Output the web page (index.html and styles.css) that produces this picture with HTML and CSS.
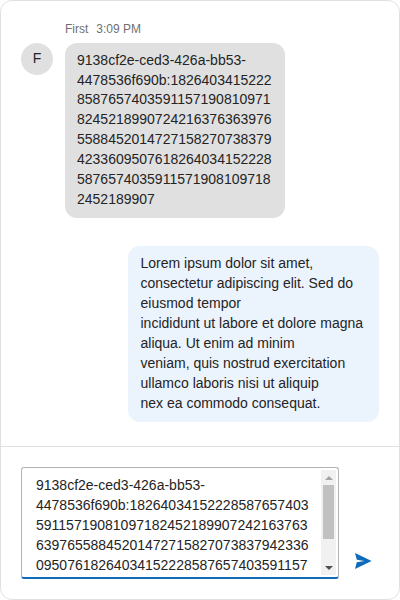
FILE: index.html
```html
<!DOCTYPE html>
<html lang="en">
<head>
<meta charset="utf-8">
<title>Chat</title>
<link rel="stylesheet" href="styles.css">
</head>
<body>
<main class="chat">
  <section class="messages">
    <div class="row incoming">
      <div class="avatar">F</div>
      <div class="content">
        <div class="meta"><span>First</span><time>3:09 PM</time></div>
        <div class="bubble">9138cf2e-ced3-426a-bb53-4478536f690b:182640341522285876574035911571908109718245218990724216376363976558845201472715827073837942336095076182640341522285876574035911571908109718&#8203;2452189907</div>
      </div>
    </div>
    <div class="row outgoing">
      <div class="bubble">Lorem ipsum dolor sit amet, consectetur adipiscing elit. Sed do eiusmod tempor
incididunt ut labore et dolore magna aliqua. Ut enim ad minim
veniam, quis nostrud exercitation ullamco laboris nisi ut aliquip
nex ea commodo consequat.</div>
    </div>
  </section>
  <footer class="composer">
    <div class="field">
      <div class="text">9138cf2e-ced3-426a-bb53-<br>4478536f690b:18264034152228587657403<br>59115719081097182452189907242163763<br>63976558845201472715827073837942336<br>09507618264034152228587657403591157</div>
      <div class="scrollbar"><i class="up"></i><i class="thumb"></i><i class="down"></i></div>
    </div>
    <button class="send" aria-label="Send"><svg width="18" height="18" viewBox="0 0 18 18"><path d="M0 1L16.6 9L0 17L1.8 10.3L9.5 9L1.8 7.7Z" fill="#0f6cbd"/></svg></button>
  </footer>
</main>
</body>
</html>
```
FILE: styles.css
```css
* { box-sizing: border-box; }
body { margin: 0; background: #fff; font: 14px/20px "Liberation Sans", Arial, sans-serif; color: #242424; }
.chat { width: 400px; height: 600px; border: 1px solid #e0e0e0; border-radius: 12px; display: flex; flex-direction: column; overflow: hidden; }
.messages { flex: 1; padding: 20px; }
.row { display: flex; }
.incoming { gap: 12px; }
.avatar { width: 32px; height: 32px; margin-top: 22px; border-radius: 50%; background: #e0e0e0; text-align: center; line-height: 31px; }
.meta { display: flex; gap: 8px; height: 16px; margin-bottom: 6px; font-size: 12px; line-height: 16px; color: #707070; }
.bubble { border-radius: 12px; overflow-wrap: anywhere; }
.incoming .bubble { width: 220px; height: 175px; padding: 7.6px 12px 7px; line-height: 19.9px; background: #e0e0e0; }
.outgoing { justify-content: flex-end; margin-top: 28px; }
.outgoing .bubble { width: 251px; height: 176px; padding: 7px 12px 8px 12.5px; white-space: pre-line; background: #ebf3fc; }
.composer { height: 153px; padding: 20px; border-top: 1px solid #e0e0e0; display: flex; gap: 16px; }
.field { width: 318px; height: 112px; padding: 2px 2px 0 14px; border: 1px solid #b3b3b3; border-bottom: 2px solid #0f6cbd; border-radius: 3px; display: flex; justify-content: space-between; overflow: hidden; }
.text { padding-top: 5px; white-space: nowrap; }
.scrollbar { width: 15px; height: 105px; background: #f1f1f1; display: flex; flex-direction: column; align-items: center; }
.up { margin-top: 6px; border: 4px solid transparent; border-top: 0; border-bottom-color: #a3a3a3; }
.thumb { width: 11px; height: 54px; margin-top: 5px; background: #c1c1c1; }
.down { margin-top: auto; margin-bottom: 5px; border: 4px solid transparent; border-bottom: 0; border-top-color: #505050; }
.send { width: 18px; height: 18px; margin-top: 85px; padding: 0; border: 0; background: none; }
.send svg { display: block; }
```
